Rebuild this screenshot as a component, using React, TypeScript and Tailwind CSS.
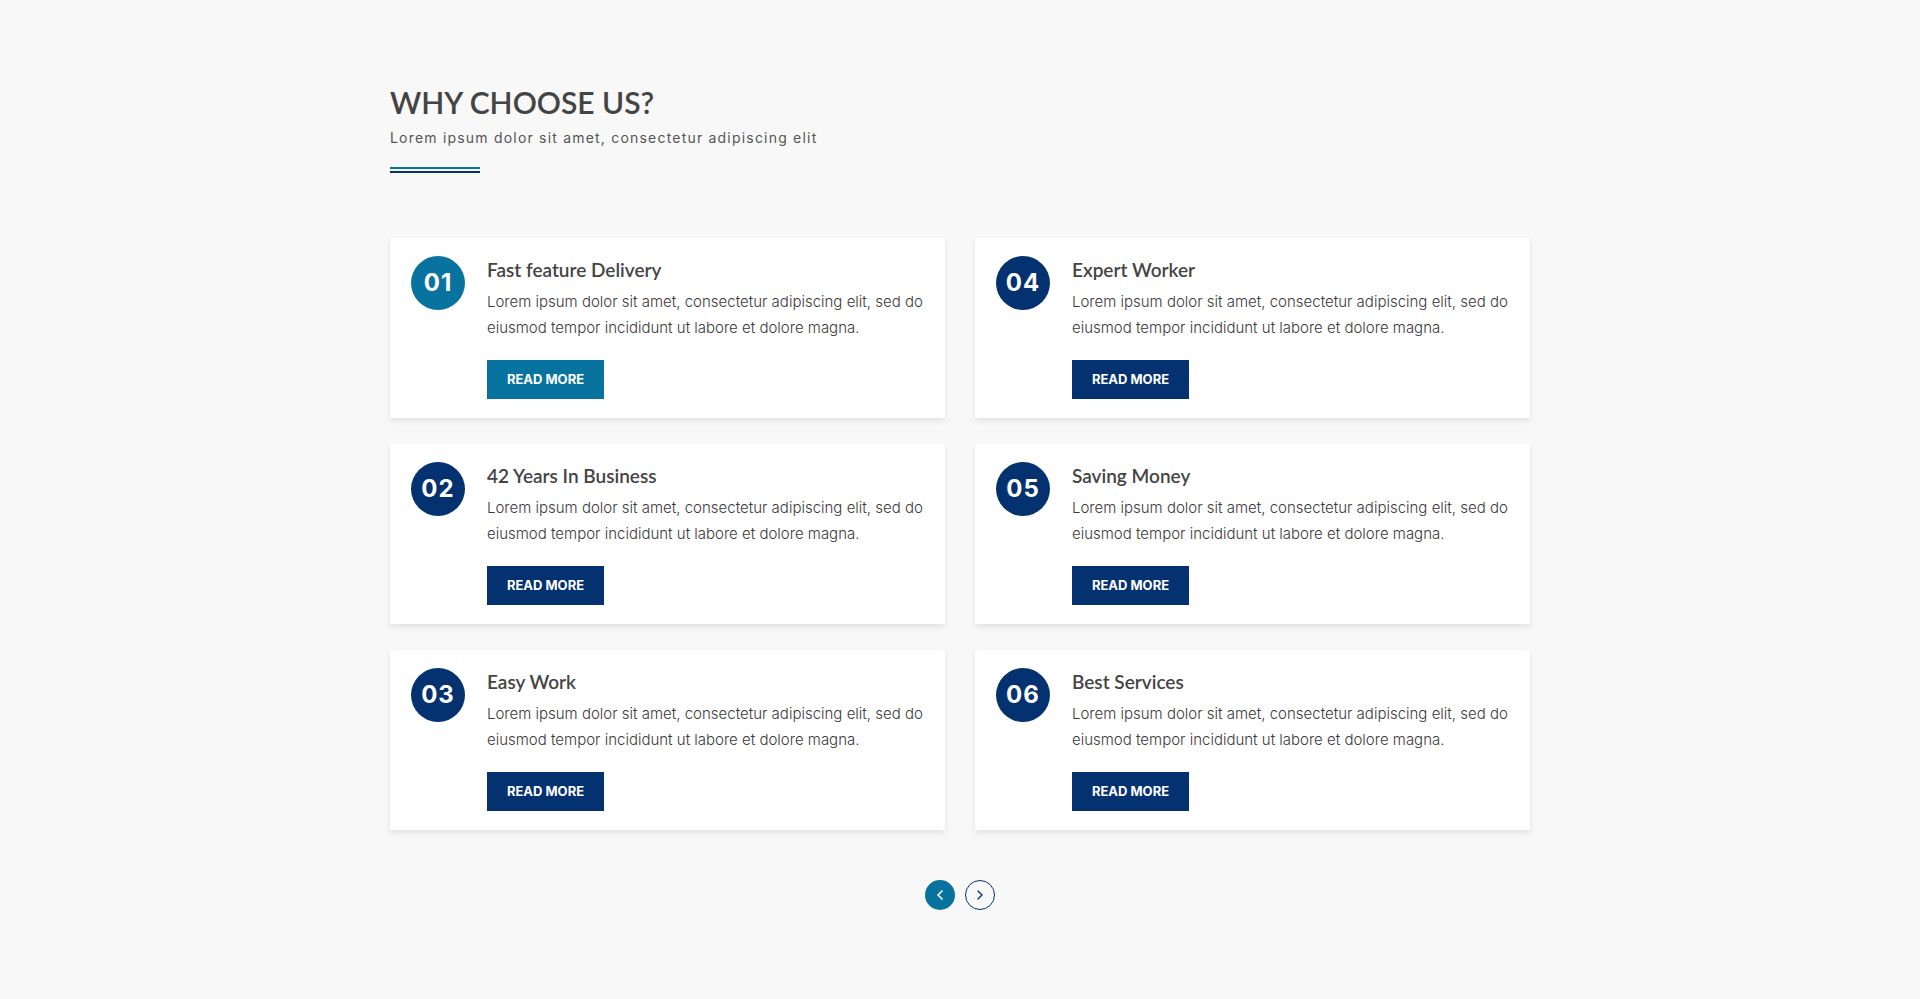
import React from 'react';
import { ChevronLeft, ChevronRight } from 'lucide-react';

interface Feature {
  num: string;
  title: string;
  accent?: boolean;
}

const features: Feature[] = [
  { num: '01', title: 'Fast feature Delivery', accent: true },
  { num: '04', title: 'Expert Worker' },
  { num: '02', title: '42 Years In Business' },
  { num: '05', title: 'Saving Money' },
  { num: '03', title: 'Easy Work' },
  { num: '06', title: 'Best Services' },
];

const FeatureCard: React.FC<{ item: Feature }> = ({ item }) => {
  const bg = item.accent ? 'bg-[#08739f]' : 'bg-[#04316f]';
  return (
    <div className="bg-white shadow-[0_3px_6px_rgba(0,0,0,0.09)] h-[180px] pt-[18px] pl-[21px] pr-[12px] flex gap-[22px]">
      <div
        className={`${bg} w-[54px] h-[54px] rounded-full shrink-0 flex items-center justify-center text-white text-[24px] font-bold tracking-[1px] font-['Inter',sans-serif]`}
      >
        {item.num}
      </div>
      <div className="flex-1">
        <h3 className="mt-[1px] text-[19px] leading-[26px] font-semibold text-[#444] font-['Lato',sans-serif]">
          {item.title}
        </h3>
        <p className="mt-[6px] text-[15px] leading-[26px] font-light text-[#3a3a3a] font-['Inter',sans-serif]">
          Lorem ipsum dolor sit amet, consectetur adipiscing elit, sed do eiusmod tempor incididunt ut labore et dolore magna.
        </p>
        <button
          className={`${bg} mt-[19px] w-[117px] h-[39px] text-white text-[13px] font-bold uppercase font-['Inter',sans-serif]`}
        >
          Read More
        </button>
      </div>
    </div>
  );
};

export default function App() {
  return (
    <div className="min-h-screen bg-[#f8f8f8] pt-[84px] pb-[90px]">
      <div className="w-[1140px] mx-auto">
        <h2 className="text-[30px] leading-[36px] font-semibold text-[#444] font-['Lato',sans-serif]">
          WHY CHOOSE US?
        </h2>
        <p className="mt-[8px] text-[14px] leading-[20px] tracking-[1.2px] text-[#555] font-['Inter',sans-serif]">
          Lorem ipsum dolor sit amet, consectetur adipiscing elit
        </p>
        <div className="mt-[19px] w-[90px] flex flex-col gap-[2px]">
          <div className="h-[2px] bg-[#08739f]" />
          <div className="h-[2px] bg-[#04316f]" />
        </div>

        <div className="mt-[65px] grid grid-cols-2 gap-x-[30px] gap-y-[26px]">
          {features.map((f) => (
            <FeatureCard key={f.num} item={f} />
          ))}
        </div>

        <div className="mt-[50px] flex justify-center gap-[10px]">
          <button className="w-[30px] h-[30px] rounded-full bg-[#08739f] text-white flex items-center justify-center">
            <ChevronLeft size={16} strokeWidth={2.5} />
          </button>
          <button className="w-[30px] h-[30px] rounded-full border border-[#04316f] text-[#04316f] flex items-center justify-center">
            <ChevronRight size={16} strokeWidth={2} />
          </button>
        </div>
      </div>
    </div>
  );
}
